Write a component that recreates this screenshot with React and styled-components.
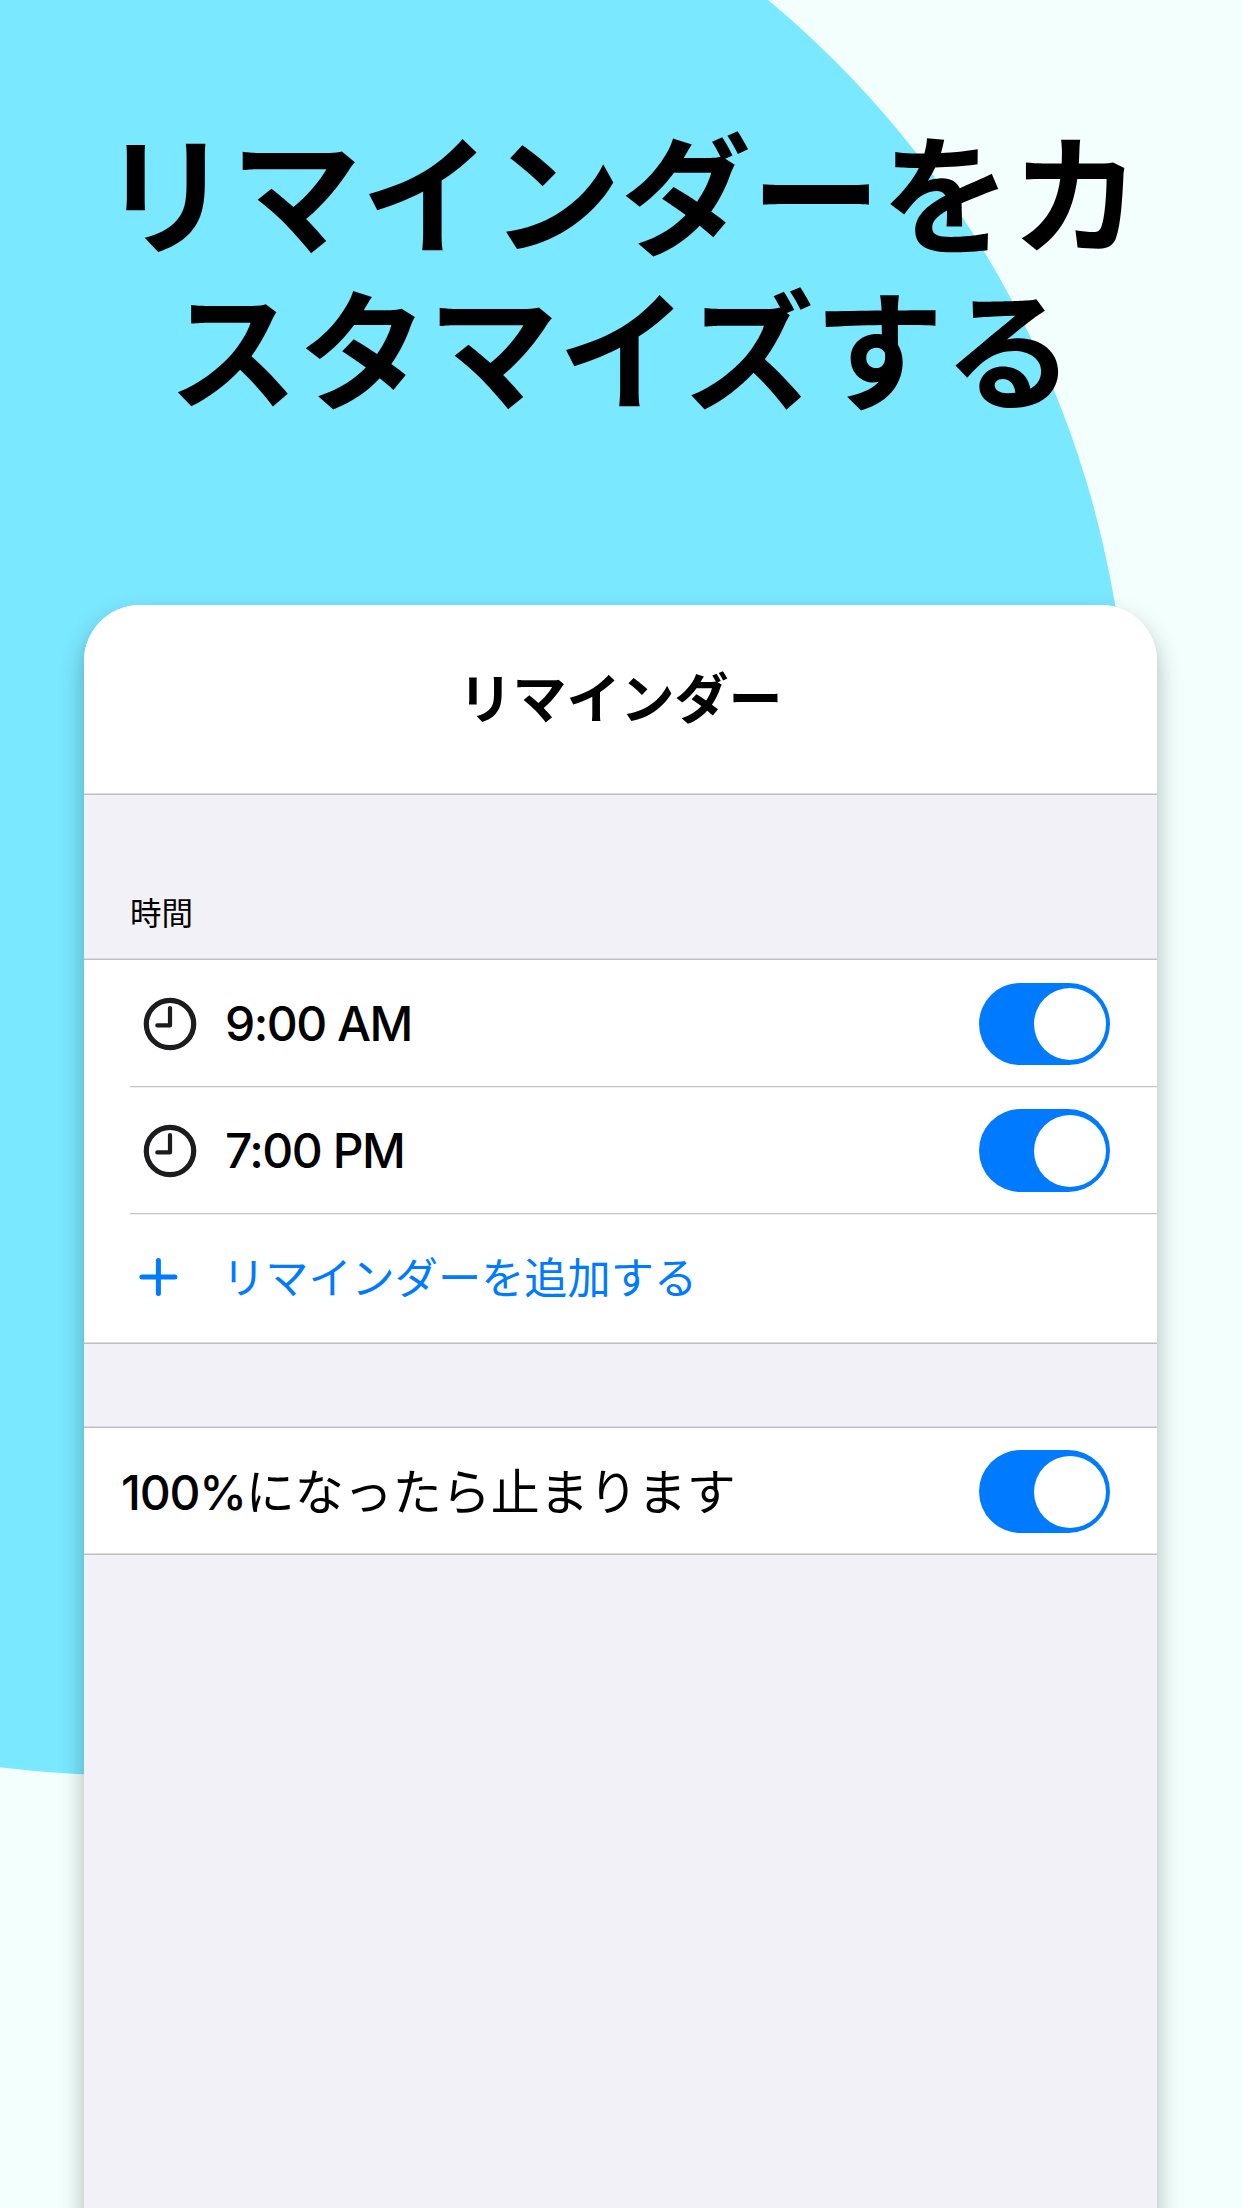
import React from "react";
import styled, { createGlobalStyle } from "styled-components";

const GlobalStyle = createGlobalStyle`
  body {
    margin: 0;
    background: #f2fffd;
    font-family: Inter, "Noto Sans CJK JP", sans-serif;
    color: #000;
  }
`;

const Page = styled.main`
  position: relative;
  display: flex;
  flex-direction: column;
  align-items: center;
  width: 1242px;
  height: 2208px;
  overflow: hidden;
  background: #f2fffd;
`;

const Circle = styled.div`
  position: absolute;
  left: -879px;
  top: -233px;
  width: 2008px;
  height: 2008px;
  border-radius: 50%;
  background: #7ae8ff;
`;

const Headline = styled.h1`
  position: relative;
  flex: none;
  margin: 0;
  padding-top: 109px;
  height: 605px;
  box-sizing: border-box;
  font: 700 130px/156px "Noto Sans CJK JP", sans-serif;
  text-align: center;
  white-space: nowrap;
`;

const CardShadow = styled.div`
  position: relative;
  flex: none;
  margin-right: 1px;
  border-radius: 56px 56px 0 0;
  box-shadow: 0 12px 24px rgba(0, 0, 0, 0.28);
`;

const Card = styled.section`
  display: flex;
  flex-direction: column;
  width: 1073px;
  height: 1700px;
  border-radius: 56px 56px 0 0;
  overflow: hidden;
  background: #f2f1f8;
`;

const Rule = styled.div`
  flex: none;
  height: 2px;
  background: linear-gradient(#dcdcdf 50%, #bfbfc3 50%);
`;

const CardHeader = styled.header`
  display: flex;
  align-items: center;
  justify-content: center;
  height: 188px;
  padding-bottom: 6px;
  box-sizing: border-box;
  background: #fff;
`;

const CardTitle = styled.h2`
  margin: 0;
  font: 700 54px/78px "Noto Sans CJK JP", sans-serif;
`;

const GroupLabel = styled.div`
  display: flex;
  align-items: flex-end;
  height: ${(p) => p.$height}px;
  box-sizing: border-box;
  padding: 0 46px 24px;
  font: 400 31.5px/46px "Noto Sans CJK JP", sans-serif;
`;

const Row = styled.div`
  display: flex;
  align-items: center;
  height: ${(p) => p.$height}px;
  box-sizing: border-box;
  padding: ${(p) => p.$top || 0}px 46.6px 0 ${(p) => p.$left}px;
  background: #fff;
`;

const Divider = styled.div`
  height: 2px;
  padding-left: 46px;
  background: #fff;

  &::after {
    content: "";
    display: block;
    height: 2px;
    background: linear-gradient(#c4c4c7 50%, #f0f0f1 50%);
  }
`;

const IconSlot = styled.span`
  display: flex;
  width: ${(p) => p.$width}px;

  svg {
    display: block;
  }
`;

const Time = styled.span`
  flex: 1;
  font: 500 48px/58px Inter, sans-serif;
  letter-spacing: -1.5px;
`;

const AddLabel = styled.span`
  padding-bottom: 4px;
  color: #007aff;
  font: 400 43.2px/64px "Noto Sans CJK JP", sans-serif;
`;

const AddRow = styled(Row)`
  padding-bottom: 3px;
`;

const OptionLabel = styled.span`
  flex: 1;
  display: flex;
  align-items: baseline;
  padding-bottom: 6px;
  font: 400 49px/72px "Noto Sans CJK JP", sans-serif;
`;

const Percent = styled.span`
  font: 500 48px/58px Inter, sans-serif;
  letter-spacing: -1.2px;
`;

const Switch = styled.button`
  display: flex;
  align-items: center;
  justify-content: flex-end;
  width: 131px;
  height: 82.5px;
  padding: 0 4.6px;
  border: 0;
  border-radius: 42px;
  box-sizing: border-box;
  background: #007aff;
`;

const Knob = styled.span`
  width: 72px;
  height: 72px;
  border-radius: 50%;
  background: #fff;
`;

function Toggle() {
  return (
    <Switch role="switch" aria-checked="true">
      <Knob />
    </Switch>
  );
}

function Clock() {
  return (
    <svg width="54" height="54" viewBox="0 0 54 54" fill="none" stroke="#1c1c1e">
      <circle cx="27" cy="27" r="23.7" strokeWidth="5.2" />
      <path d="M27 11V28.4H14.3" strokeWidth="4.2" strokeLinecap="round" strokeLinejoin="round" />
    </svg>
  );
}

function Plus() {
  return (
    <svg width="40" height="40" viewBox="0 0 40 40" fill="none" stroke="#007aff" strokeWidth="5" strokeLinecap="round">
      <path d="M20.4 3.5V36.5M3.9 20H36.9" />
    </svg>
  );
}

function TimeRow({ time, height, top }) {
  return (
    <Row $left={59} $height={height} $top={top}>
      <IconSlot $width={82}>
        <Clock />
      </IconSlot>
      <Time>{time}</Time>
      <Toggle />
    </Row>
  );
}

export default function App() {
  return (
    <Page>
      <GlobalStyle />
      <Circle />
      <Headline>
        リマインダーをカ
        <br />
        スタマイズする
      </Headline>
      <CardShadow>
        <Card>
          <CardHeader>
            <CardTitle>リマインダー</CardTitle>
          </CardHeader>
          <Rule />
          <GroupLabel $height={163}>時間</GroupLabel>
          <Rule />
          <TimeRow time="9:00 AM" height={126} top={2} />
          <Divider />
          <TimeRow time="7:00 PM" height={125} />
          <Divider />
          <AddRow $left={54} $height={127}>
            <IconSlot $width={84}>
              <Plus />
            </IconSlot>
            <AddLabel>リマインダーを追加する</AddLabel>
          </AddRow>
          <Rule />
          <GroupLabel $height={82} />
          <Rule />
          <Row $left={37} $height={125} $top={2}>
            <OptionLabel>
              <Percent>100%</Percent>になったら止まります
            </OptionLabel>
            <Toggle />
          </Row>
          <Rule />
        </Card>
      </CardShadow>
    </Page>
  );
}
